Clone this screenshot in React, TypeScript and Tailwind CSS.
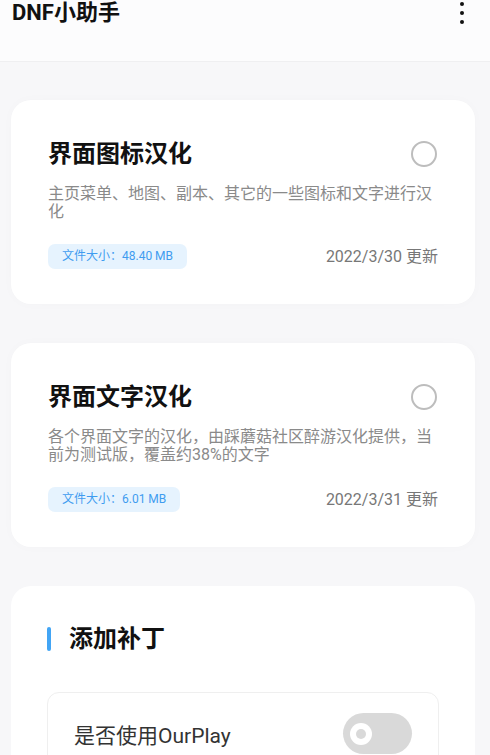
import React from 'react'

interface PackItem {
  title: string
  desc: string
  size: string
  date: string
}

const PACKS: PackItem[] = [
  {
    title: '界面图标汉化',
    desc: '主页菜单、地图、副本、其它的一些图标和文字进行汉化',
    size: '文件大小：48.40 MB',
    date: '2022/3/30 更新'
  },
  {
    title: '界面文字汉化',
    desc: '各个界面文字的汉化，由踩蘑菇社区醉游汉化提供，当前为测试版，覆盖约38%的文字',
    size: '文件大小：6.01 MB',
    date: '2022/3/31 更新'
  }
]

const font = { fontFamily: 'Roboto, "Noto Sans CJK SC", sans-serif' }

const PackCard: React.FC<{ item: PackItem }> = ({ item }) => (
  <div className="ml-[11px] mr-[15px] h-[204px] rounded-[20px] bg-white pl-[37px] pr-[37px] pt-[37px] shadow-[0_0_12px_rgba(0,0,0,0.02)]">
    <div className="flex items-center justify-between">
      <h2 className="text-[24px] font-bold leading-[34px] text-[#111]">{item.title}</h2>
      <div className="mr-[1px] h-[26px] w-[26px] rounded-full border-2 border-[#bdbdbd]" />
    </div>
    <p className="mt-[14px] h-[36px] text-[16px] leading-[18px] text-[#8a8a8a]">{item.desc}</p>
    <div className="mt-[22px] flex items-center justify-between">
      <span className="rounded-[7px] bg-[#e6f3fe] px-[14px] text-[12px] leading-[25px] text-[#3f9cf0]">
        {item.size}
      </span>
      <span className="mt-[2px] text-[16px] text-[#777]">{item.date}</span>
    </div>
  </div>
)

export default function App() {
  return (
    <div className="h-[755px] w-[490px] overflow-hidden bg-[#f7f7f9]" style={font}>
      <header className="flex h-[62px] items-start justify-between border-b border-[#efeff1] bg-[#fcfcfd] pl-[12px] pr-[26px]">
        <h1 className="text-[22px] font-bold leading-[26px] text-[#111]">DNF小助手</h1>
        <div className="mt-[1px] flex flex-col items-center gap-[5px] pt-[1px]">
          <span className="block h-[4px] w-[4px] rounded-full bg-[#111]" />
          <span className="block h-[4px] w-[4px] rounded-full bg-[#111]" />
          <span className="block h-[4px] w-[4px] rounded-full bg-[#111]" />
        </div>
      </header>

      <div className="flex flex-col gap-[39px] pt-[38px]">
        {PACKS.map((p) => (
          <PackCard key={p.title} item={p} />
        ))}

        <div className="ml-[11px] mr-[15px] h-[220px] rounded-t-[20px] bg-white px-[36px] pt-[36px]">
          <div className="flex items-center">
            <span className="h-[24px] w-[4px] rounded-full bg-[#42a5f5]" />
            <h2 className="ml-[18px] text-[24px] font-bold leading-[34px] text-[#111]">添加补丁</h2>
          </div>
          <div className="mt-[36px] h-[120px] rounded-[12px] border border-[#efefef]">
            <div className="flex items-start justify-between pl-[26px] pr-[26px] pt-[20px]">
              <span className="mt-[8px] text-[21px] leading-[30px] text-[#333]">是否使用OurPlay</span>
              <div className="flex h-[41px] w-[69px] items-center rounded-full bg-[#d9d9d9] pl-[7px]">
                <div className="flex h-[22px] w-[22px] items-center justify-center rounded-full bg-white">
                  <div className="h-[10px] w-[10px] rounded-full bg-[#d9d9d9]" />
                </div>
              </div>
            </div>
          </div>
        </div>
      </div>
    </div>
  )
}
